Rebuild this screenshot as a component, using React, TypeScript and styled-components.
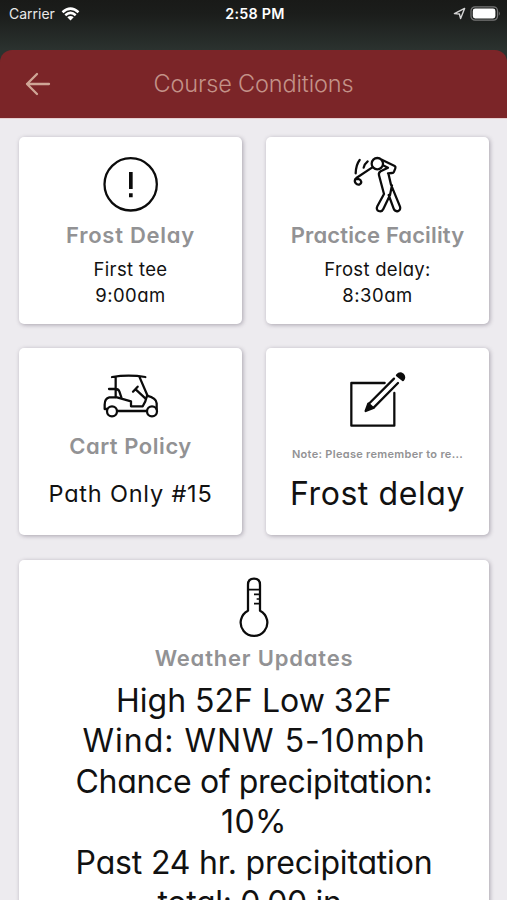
import React from 'react';
import styled, { createGlobalStyle } from 'styled-components';

const GlobalStyle = createGlobalStyle`
  * { box-sizing: border-box; }
  body {
    margin: 0;
    background: #edebef;
    font-family: Inter, "Open Sans", sans-serif;
    font-feature-settings: "cv11";
  }
`;

const Screen = styled.div`
  height: 900px;
  overflow: hidden;
  background: #edebef;
`;

const Top = styled.div`
  background: linear-gradient(#191a18 0, #1b1d1b 14px, #2b322f 50px, #2b322f 100%);
`;

const StatusBar = styled.div`
  display: grid;
  grid-template-columns: 1fr auto 1fr;
  height: 50px;
  padding: 0 6px 23px 9px;
  align-items: center;
  color: #fff;
`;

const Carrier = styled.div`
  display: flex;
  align-items: center;
  gap: 6px;
  font-size: 14px;
  color: #e9e9e9;
  font-feature-settings: normal;
`;

const Clock = styled.div`
  font-size: 14.3px;
  font-weight: 600;
  letter-spacing: 0.25px;
`;

const Indicators = styled.div`
  display: flex;
  align-items: center;
  justify-content: flex-end;
  gap: 4px;
`;

const Header = styled.header`
  display: grid;
  grid-template-columns: 60px 1fr 60px;
  align-items: center;
  height: 69px;
  padding-bottom: 1px;
  border-radius: 12px 12px 0 0;
  background: #7b2528;
  border-bottom: 1px solid #e6cfd1;
`;

const Back = styled.button`
  display: flex;
  padding: 0 0 0 25px;
  border: 0;
  background: none;
`;

const Title = styled.h1`
  margin: 0;
  font-size: 23.5px;
  font-weight: 300;
  letter-spacing: -0.15px;
  text-align: center;
  color: #c39288;
`;

const Grid = styled.main`
  display: grid;
  grid-template-columns: 1fr 1fr;
  gap: 24.5px 24px;
  padding: 17.5px 18px 0 19px;
`;

const Card = styled.section<{ $wide?: boolean }>`
  display: flex;
  flex-direction: column;
  align-items: center;
  height: ${p => (p.$wide ? 420 : 187)}px;
  grid-column: ${p => (p.$wide ? '1 / -1' : 'auto')};
  border-radius: 5px;
  background: #fff;
  box-shadow: 1px 1px 4px rgba(60, 50, 70, 0.38);
`;

const Icon = styled.svg`
  flex: none;
  width: 72px;
  height: 84px;
  fill: none;
  stroke: #0b0b0b;
  stroke-width: 6.8;
  stroke-linecap: round;
  stroke-linejoin: round;
`;

const Heading = styled.h2<{ $note?: boolean; $track: number }>`
  flex: none;
  height: 28px;
  margin: 0;
  font-size: ${p => (p.$note ? 11 : 22)}px;
  line-height: ${p => (p.$note ? 44 : 28)}px;
  font-weight: 600;
  letter-spacing: ${p => p.$track}px;
  white-space: nowrap;
  color: #929294;
`;

const Body = styled.div<{ $size: number; $line: number; $top?: boolean }>`
  display: flex;
  flex: none;
  flex-direction: column;
  align-items: center;
  justify-content: ${p => (p.$top ? 'flex-start' : 'center')};
  height: ${p => (p.$top ? 'auto' : '68px')};
  padding-top: ${p => (p.$top ? 9 : 0)}px;
  font-size: ${p => p.$size}px;
  line-height: ${p => p.$line}px;
  color: #111;
`;

const Line = styled.div<{ $track: number }>`
  letter-spacing: ${p => p.$track}px;
  white-space: nowrap;
`;

export default function App() {
  return (
    <Screen>
      <GlobalStyle />
      <Top>
        <StatusBar>
          <Carrier>
            Carrier
            <svg width="19" height="14" viewBox="0 0 18 14" fill="none" stroke="#fff" strokeWidth="2.5">
              <path d="M1 5.2Q9-2 17 5.2M3.8 8.2Q9 3.6 14.2 8.2" />
              <path d="M9 13.6 5.8 10.3Q9 7.8 12.2 10.3Z" fill="#fff" stroke="none" />
            </svg>
          </Carrier>
          <Clock>2:58 PM</Clock>
          <Indicators>
            <svg width="13" height="13" viewBox="0 0 13 13" fill="none" stroke="#d5d5d5" strokeWidth="1.4" strokeLinejoin="round">
              <path d="M1.4 6.6 11.6 1.4 7.6 11.6 6.4 7Z" />
            </svg>
            <svg width="31" height="15" viewBox="0 0 31 15">
              <rect x="1" y="0.8" width="26.5" height="13.4" rx="4" fill="none" stroke="#777" strokeWidth="1.2" />
              <rect x="2.8" y="2.5" width="22.6" height="10" rx="2.4" fill="#fff" />
              <path d="M28.8 5.2q2 2.3 0 4.6z" fill="#777" />
            </svg>
          </Indicators>
        </StatusBar>
        <Header>
          <Back aria-label="Back">
            <svg width="26" height="24" viewBox="0 0 26 24" fill="none" stroke="#cfa596" strokeWidth="2.3" strokeLinecap="round" strokeLinejoin="round">
              <path d="M24 12H2M12 2 2 12l10 10" />
            </svg>
          </Back>
          <Title>Course Conditions</Title>
        </Header>
      </Top>

      <Grid>
        <Card>
          <Icon viewBox="254 20 216 252">
            <circle cx="361" cy="162" r="78.5" />
            <path d="M361.5 125v51M361.5 188.500v12" strokeWidth="11" strokeLinecap="butt" />
          </Icon>
          <Heading $track={0.75}>Frost Delay</Heading>
          <Body $size={18.5} $line={25.2}>
            <Line $track={0.35}>First tee</Line>
            <Line $track={0.45}>9:00am</Line>
          </Body>
        </Card>

        <Card>
          <Icon viewBox="246 20 216 252">
            <circle cx="352" cy="100" r="17" />
            <path d="M337 111 289 143M286 146c-5 10 4 19 13 16 8-4 5-13-3-16z" />
            <path d="M299 89q-11 14-12 40M323 93q-10 8-12 19" />
            <path d="M367 89l37 18q4 3 2 7l-4 10q-2 4-6 4l-12 1M369 105l15 7-22 11q-7 4-5 12l15 56-20 37c-7 14 12 21 18 8l20-42 6-29M385 129l8 34 27 66c5 14-14 19-19 6l-15-41" />
          </Icon>
          <Heading $track={0.15}>Practice Facility</Heading>
          <Body $size={18.5} $line={25.2}>
            <Line $track={0.3}>Frost delay:</Line>
            <Line $track={0.5}>8:30am</Line>
          </Body>
        </Card>

        <Card>
          <Icon viewBox="254 24 216 252">
            <path d="M305 111q50-8 100 0M316 111v60M387 110l25 58M296 147h20q8 0 11 7l6 18" />
            <path d="M290 207h-7v-13q0-19 14-22h23l42 12v15h35q9-13 13-32 28 7 29 23v18M321 213h88" />
            <path d="M368 155l14-15M376 148l29 27" />
            <circle cx="305" cy="214" r="15" />
            <circle cx="425" cy="214" r="15" />
          </Icon>
          <Heading $track={0.55}>Cart Policy</Heading>
          <Body $size={23.5} $line={30}>
            <Line $track={0.8}>Path Only #15</Line>
          </Body>
        </Card>

        <Card>
          <Icon viewBox="246 24 216 252">
            <path d="M374 129H274v128h129v-98" />
            <path d="M402 116l-76 76M414 129l-73 74" />
            <path d="M317 213l8-22 15 13z" fill="#0b0b0b" />
            <path d="M411 106q8-9 17-3 8 9 1 17z" fill="#0b0b0b" />
          </Icon>
          <Heading $note $track={0.3}>Note: Please remember to re...</Heading>
          <Body $size={32} $line={40}>
            <Line $track={0.58}>Frost delay</Line>
          </Body>
        </Card>

        <Card $wide>
          <Icon viewBox="474 30 216 252">
            <path d="M564 182v-78q0-18 18-18t18 18v78a40 40 0 1 1-36 0" />
            <path d="M565 119h34M582 133h17M590 147h9M582 161h17" strokeWidth="5" strokeLinecap="butt" />
          </Icon>
          <Heading $track={0.8}>Weather Updates</Heading>
          <Body $size={32} $line={40.6} $top>
            <Line $track={0}>High 52F Low 32F</Line>
            <Line $track={1}>Wind: WNW 5-10mph</Line>
            <Line $track={-0.35}>Chance of precipitation:</Line>
            <Line $track={0.4}>10%</Line>
            <Line $track={-0.18}>Past 24 hr. precipitation</Line>
            <Line $track={-0.35}>total: 0.00 in.</Line>
          </Body>
        </Card>
      </Grid>
    </Screen>
  );
}
